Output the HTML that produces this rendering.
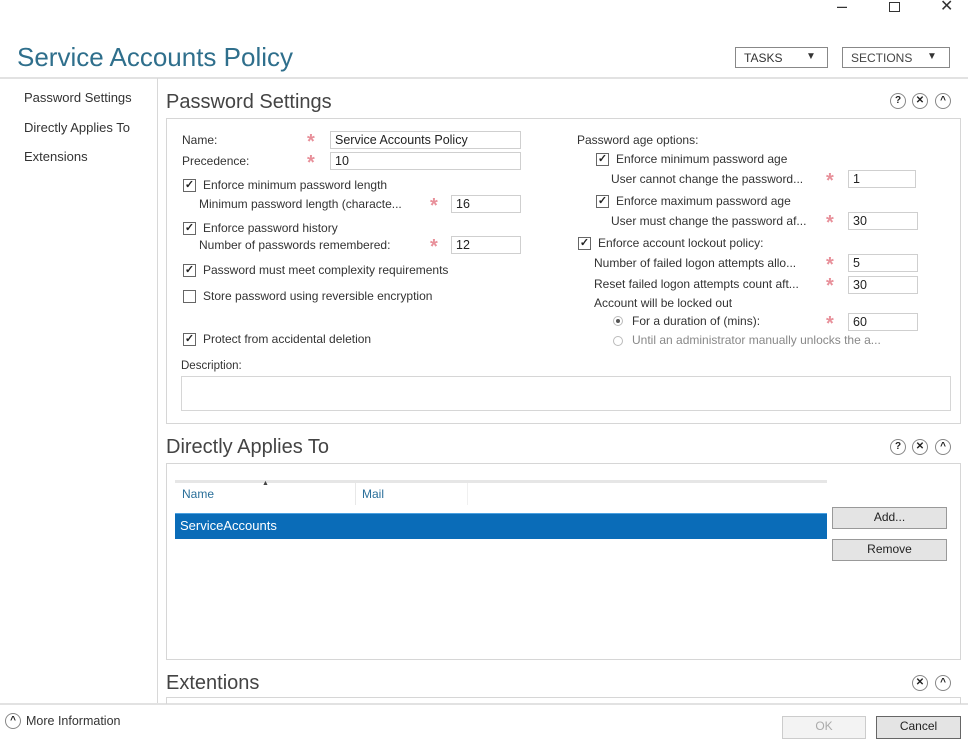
<!DOCTYPE html>
<html><head><meta charset="utf-8"><style>
*{box-sizing:border-box;margin:0;padding:0}
body{width:968px;height:744px;background:#fff;position:relative;overflow:hidden;font-family:"Liberation Sans",sans-serif;font-size:12px;color:#333}
.a{position:absolute;white-space:nowrap;line-height:16px}
.box{position:absolute;border:1px solid #d6d6d6}
.in{position:absolute;border:1px solid #cfcfcf;height:18px;line-height:16px;padding-left:4px;font-size:12.5px;color:#222;background:#fff}
.cb{position:absolute;width:13px;height:13px;border:1px solid #666;background:#fff;font-size:11px;line-height:11px;text-align:center;color:#222;font-weight:bold}
.st{position:absolute;color:#e8909a;font-size:20px;line-height:16px;font-weight:bold}
.h{position:absolute;font-size:20px;color:#444;line-height:22px}
.ic{position:absolute;width:16px;height:16px;border:1px solid #888;border-radius:50%;font-size:10px;line-height:14px;text-align:center;color:#222;font-weight:bold}
.btn{position:absolute;border:1px solid #999;background:#e4e4e4;text-align:center;line-height:19px;font-size:12px;color:#222}
.rd{position:absolute;width:10px;height:10px;border:1px solid #bbb;border-radius:50%}
</style></head><body>
<div class="a" style="left:837px;top:-2px;font-size:18px;color:#333">–</div>
<div style="position:absolute;left:889px;top:2px;width:11px;height:10px;border:1.5px solid #333"></div>
<div class="a" style="left:940px;top:-1px;font-size:16px;color:#333;font-weight:normal">✕</div>
<div class="a" style="left:17px;top:41px;font-size:26px;line-height:32px;color:#2f6f8c">Service Accounts Policy</div>
<div style="position:absolute;left:735px;top:47px;width:93px;height:21px;border:1px solid #888"><span class="a" style="left:8px;top:2px;font-size:12px;color:#333">TASKS</span><span class="a" style="left:70px;top:1px;font-size:10px">▼</span></div>
<div style="position:absolute;left:842px;top:47px;width:108px;height:21px;border:1px solid #888"><span class="a" style="left:8px;top:2px;font-size:12px;color:#444">SECTIONS</span><span class="a" style="left:84px;top:1px;font-size:10px">▼</span></div>
<div style="position:absolute;left:0;top:77px;width:968px;height:2px;background:#e2e2e2"></div>
<div style="position:absolute;left:157px;top:78px;width:1px;height:626px;background:#d8d8d8"></div>
<div style="position:absolute;left:0;top:703px;width:968px;height:2px;background:#e2e2e2"></div>
<div class="a" style="left:24px;top:90px;font-size:13px">Password Settings</div>
<div class="a" style="left:24px;top:120px;font-size:13px">Directly Applies To</div>
<div class="a" style="left:24px;top:149px;font-size:13px">Extensions</div>

<div class="h" style="left:166px;top:91px">Password Settings</div>
<div class="ic" style="left:890px;top:93px">?</div><div class="ic" style="left:912px;top:93px">✕</div><div class="ic" style="left:935px;top:93px">^</div>
<div class="box" style="left:166px;top:118px;width:795px;height:306px"></div>
<div class="a" style="left:182px;top:132px">Name:</div>
<div class="st" style="left:307px;top:134px">*</div><div class="in" style="left:330px;top:131px;width:191px">Service Accounts Policy</div>
<div class="a" style="left:182px;top:153px">Precedence:</div>
<div class="st" style="left:307px;top:155px">*</div><div class="in" style="left:330px;top:152px;width:191px">10</div>
<div class="cb" style="left:183px;top:179px">✓</div><div class="a" style="left:203px;top:177px">Enforce minimum password length</div>
<div class="a" style="left:199px;top:196px">Minimum password length (characte...</div>
<div class="st" style="left:430px;top:198px">*</div><div class="in" style="left:451px;top:195px;width:70px">16</div>
<div class="cb" style="left:183px;top:222px">✓</div><div class="a" style="left:203px;top:220px">Enforce password history</div>
<div class="a" style="left:199px;top:237px">Number of passwords remembered:</div>
<div class="st" style="left:430px;top:239px">*</div><div class="in" style="left:451px;top:236px;width:70px">12</div>
<div class="cb" style="left:183px;top:264px">✓</div><div class="a" style="left:203px;top:262px">Password must meet complexity requirements</div>
<div class="cb" style="left:183px;top:290px"></div><div class="a" style="left:203px;top:288px">Store password using reversible encryption</div>
<div class="cb" style="left:183px;top:333px">✓</div><div class="a" style="left:203px;top:331px">Protect from accidental deletion</div>
<div class="a" style="left:181px;top:358px;font-size:11.5px">Description:</div>
<div class="box" style="left:181px;top:376px;width:770px;height:35px"></div>

<div class="a" style="left:577px;top:132px">Password age options:</div>
<div class="cb" style="left:596px;top:153px">✓</div><div class="a" style="left:616px;top:151px">Enforce minimum password age</div>
<div class="a" style="left:611px;top:171px">User cannot change the password...</div>
<div class="st" style="left:826px;top:173px">*</div><div class="in" style="left:848px;top:170px;width:68px">1</div>
<div class="cb" style="left:596px;top:195px">✓</div><div class="a" style="left:616px;top:193px">Enforce maximum password age</div>
<div class="a" style="left:611px;top:213px">User must change the password af...</div>
<div class="st" style="left:826px;top:215px">*</div><div class="in" style="left:848px;top:212px;width:70px">30</div>
<div class="cb" style="left:578px;top:237px">✓</div><div class="a" style="left:598px;top:235px">Enforce account lockout policy:</div>
<div class="a" style="left:594px;top:255px">Number of failed logon attempts allo...</div>
<div class="st" style="left:826px;top:257px">*</div><div class="in" style="left:848px;top:254px;width:70px">5</div>
<div class="a" style="left:594px;top:276px">Reset failed logon attempts count aft...</div>
<div class="st" style="left:826px;top:278px">*</div><div class="in" style="left:848px;top:276px;width:70px">30</div>
<div class="a" style="left:594px;top:295px">Account will be locked out</div>
<div class="rd" style="left:613px;top:316px"><div style="position:absolute;left:2px;top:2px;width:4px;height:4px;border-radius:50%;background:#555"></div></div>
<div class="a" style="left:632px;top:313px">For a duration of (mins):</div>
<div class="st" style="left:826px;top:316px">*</div><div class="in" style="left:848px;top:313px;width:70px">60</div>
<div class="rd" style="left:613px;top:336px"></div>
<div class="a" style="left:632px;top:332px;color:#888">Until an administrator manually unlocks the a...</div>

<div class="h" style="left:166px;top:436px">Directly Applies To</div>
<div class="ic" style="left:890px;top:439px">?</div><div class="ic" style="left:912px;top:439px">✕</div><div class="ic" style="left:935px;top:439px">^</div>
<div class="box" style="left:166px;top:463px;width:795px;height:197px"></div>
<div style="position:absolute;left:175px;top:480px;width:652px;height:3px;background:#e6e6e6"></div>
<div style="position:absolute;left:355px;top:483px;width:1px;height:22px;background:#e8e8e8"></div>
<div style="position:absolute;left:467px;top:483px;width:1px;height:22px;background:#f0f0f0"></div>
<div class="a" style="left:182px;top:486px;color:#2a6f9a">Name</div>
<div class="a" style="left:262px;top:476px;font-size:7px;color:#444">▲</div>
<div class="a" style="left:362px;top:486px;color:#2a6f9a">Mail</div>
<div style="position:absolute;left:175px;top:513px;width:652px;height:26px;background:#0a6cb8;border-top:1px solid #4aa0e0"></div>
<div class="a" style="left:180px;top:518px;color:#fff;font-size:13px">ServiceAccounts</div>
<div class="btn" style="left:832px;top:507px;width:115px;height:22px">Add...</div>
<div class="btn" style="left:832px;top:539px;width:115px;height:22px">Remove</div>

<div class="h" style="left:166px;top:672px">Extentions</div>
<div class="ic" style="left:912px;top:675px">✕</div><div class="ic" style="left:935px;top:675px">^</div>
<div style="position:absolute;left:166px;top:697px;width:795px;height:7px;border:1px solid #d6d6d6;border-bottom:none"></div>

<div class="ic" style="left:5px;top:713px">^</div>
<div class="a" style="left:26px;top:713px;font-size:12.5px">More Information</div>
<div class="btn" style="left:782px;top:716px;width:84px;height:23px;color:#aaa;background:#f3f3f3;border-color:#ccc">OK</div>
<div class="btn" style="left:876px;top:716px;width:85px;height:23px;border-color:#666">Cancel</div>
</body></html>
